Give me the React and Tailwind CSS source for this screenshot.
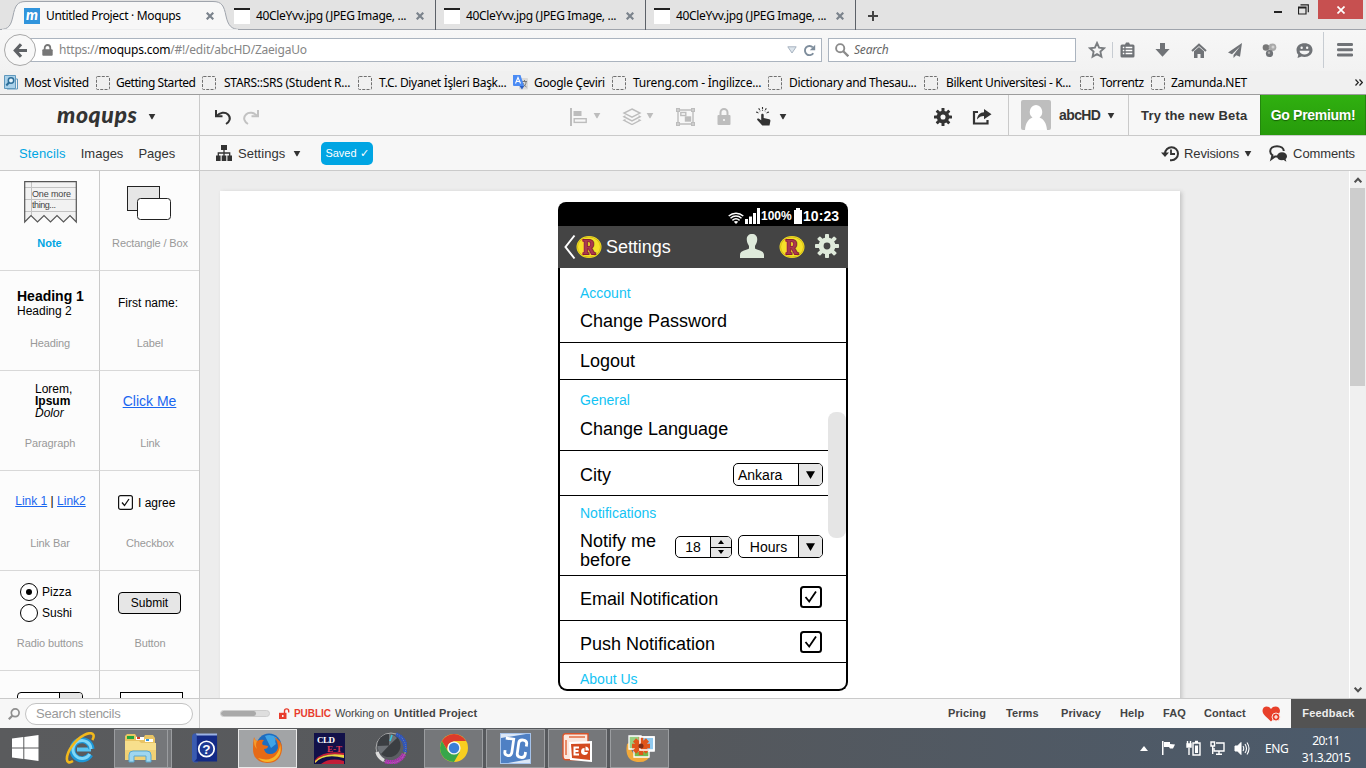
import React from "react";

const Caret = ({ className = "" }) => (
  <svg className={`shrink-0 ${className}`} width="8" height="7" viewBox="0 0 8 7" fill="currentColor"><path d="M.7 1h6.600L4.400 6.300h-.8z" /></svg>
);

const TabClose = ({ className = "" }) => (
  <svg className={`shrink-0 ${className}`} width="8" height="8" viewBox="0 0 8 8" stroke="#7b838c" strokeWidth="2.2"><path d="M.7.7l6.600 6.600M7.300.7L.7 7.300" /></svg>
);

const ImageTab = () => (
  <div className="mr-[8px] flex h-[30px] w-[202px] shrink-0 items-center border-r border-[#5c6168] pt-[2px]">
    <div className="h-4 w-4 shrink-0 border-t-2 border-[#222] bg-white" />
    <span className="ml-[6px] w-[160px] shrink-0 whitespace-nowrap tracking-[-0.33px]">40CleYvv.jpg (JPEG Image, ...</span>
    <TabClose />
  </div>
);

function TabStrip() {
  return (
    <div className="flex h-[30px] shrink-0 bg-[#e3e3e3] font-['Noto_Sans',sans-serif] text-[12px] text-black shadow-[inset_0_-1px_0_#9fa4ac]">
      <div className="relative flex h-[30px] w-[234px] shrink-0 items-center pt-[2px]">
        <svg className="absolute left-0 top-0" width="240" height="30" viewBox="0 0 240 30">
          <path d="M0 29.500C9 29.500 11 25 13 16C15 6 17 1.500 26 1.500H213C222 1.500 224 6 226 16C228 25 231 29.500 240 29.500" fill="#f7f7f7" stroke="#9fa4ac" />
          <path d="M2 30H238" stroke="#f7f7f7" strokeWidth="1.500" />
        </svg>
        <div className="relative ml-6 flex h-4 w-4 items-center justify-center bg-[#3094dc] font-['Lato',sans-serif] text-[15px] leading-none font-black text-white italic"><span className="-mt-[3px]">m</span></div>
        <span className="relative ml-[6px] w-[160px] whitespace-nowrap tracking-[-0.33px]">Untitled Project · Moqups</span>
        <TabClose className="relative" />
      </div>
      <ImageTab />
      <ImageTab />
      <ImageTab />
      <svg className="mt-[11px] ml-[4px]" width="10" height="10" viewBox="0 0 10 10" stroke="#444" strokeWidth="2"><path d="M5 0v10M0 5h10" /></svg>
      <div className="flex-1" />
      <svg className="mt-[10px]" width="10" height="4" viewBox="0 0 10 4"><path d="M1 2h8" stroke="#222" strokeWidth="2" /></svg>
      <svg className="mt-[4px] ml-[15px]" width="11" height="11" viewBox="0 0 11 11" fill="none" stroke="#222"><path d="M.5 3h7.500v7h-7.500zM.5 4h7.500M2.500.8h7.800v7.500" strokeWidth="1.200" /></svg>
      <div className="ml-[9px] flex h-[19px] w-[45px] items-center justify-center bg-[#c75050]">
        <svg width="8" height="8" viewBox="0 0 8 8" stroke="#fff" strokeWidth="1.700"><path d="M.5.5l7 7M7.500.5l-7 7" /></svg>
      </div>
      <div className="w-[3px]" />
    </div>
  );
}

function NavBar() {
  return (
    <div className="flex h-[41px] shrink-0 items-center bg-linear-to-b from-[#f7f7f7] to-[#f2f2f2] pb-[1px] font-['Noto_Sans',sans-serif] text-[12px]">
      <div className="relative z-10 ml-1 flex h-8 w-8 shrink-0 items-center justify-center rounded-full border border-[#a8a8a8] bg-[#f8f8f8]">
        <svg width="14" height="15" viewBox="0 0 14 15" fill="none" stroke="#5f6266" strokeWidth="3.200"><path d="M8 1.200L2.300 7.500L8 13.800M2.500 7.500H14" /></svg>
      </div>
      <div className="-ml-[6px] flex h-6 w-[792px] shrink-0 items-center border border-[#abb4bf] bg-white">
        <svg className="ml-[11px]" width="11" height="12" viewBox="0 0 11 12"><path d="M2.700 6V4a2.800 3 0 0 1 5.600 0v2" fill="none" stroke="#777" strokeWidth="1.800" /><rect x=".3" y="5.200" width="10.400" height="6.600" rx="1" fill="#777" /></svg>
        <span className="ml-[6px] flex-1 whitespace-nowrap tracking-[-0.22px] text-[#858585]">https://<span className="text-black">moqups.com</span>/#!/edit/abcHD/ZaeigaUo</span>
        <svg width="10" height="8" viewBox="0 0 10 8"><path d="M.8.8h8.400L5 7z" fill="#dde5ec" stroke="#a7b3c0" /></svg>
        <svg className="mr-[5px] ml-[6px]" width="13" height="13" viewBox="0 0 13 13"><path d="M10.300 9.200A4.600 4.600 0 1 1 9.800 3.300" fill="none" stroke="#7e8d9c" strokeWidth="1.900" /><path d="M12.200.8v5.400H6.800z" fill="#7e8d9c" /></svg>
      </div>
      <div className="ml-[6px] flex h-6 w-[248px] shrink-0 items-center border border-[#abb4bf] bg-white">
        <svg className="ml-[6px]" width="14" height="14" viewBox="0 0 14 14" fill="none" stroke="#8b8b8b"><circle cx="5.200" cy="5.200" r="4.100" strokeWidth="1.900" /><path d="M8.300 8.300l5 5" strokeWidth="2.300" /></svg>
        <span className="ml-[5px] tracking-[-0.2px] text-[#666] italic">Search</span>
      </div>
      <svg className="ml-[12px] shrink-0" width="18" height="18" viewBox="0 0 18 18"><path d="M9 2l2.100 4.600 5 .6-3.700 3.400 1 5L9 13.100l-4.400 2.500 1-5L1.900 7.200l5-.6z" fill="none" stroke="#7a7d80" strokeWidth="1.900" /></svg>
      <div className="ml-[6px] h-4 w-px bg-[#c7ccd2]" />
      <svg className="ml-[7px] shrink-0" width="15" height="16" viewBox="0 0 15 16"><path d="M.5 4a1.500 1.500 0 0 1 1.500-1.500h3L6 .6h3l1 1.900h3A1.500 1.500 0 0 1 14.500 4v10a1.500 1.500 0 0 1-1.500 1.500H2A1.500 1.500 0 0 1 .5 14z" fill="#707377" /><path d="M2.800 5.500h1.500M5.600 5.500h6.700M2.800 8.500h1.500M5.600 8.500h6.700M2.800 11.500h1.500M5.600 11.500h6.700" stroke="#fff" strokeWidth="1.700" /></svg>
      <svg className="ml-[20px] shrink-0" width="15" height="14" viewBox="0 0 15 14" fill="#707377"><path d="M5 0h5v6h4.600L7.500 13.800.4 6H5z" /></svg>
      <svg className="ml-[21px] shrink-0" width="16" height="15" viewBox="0 0 16 15"><path d="M1 8l7-6.300L15 8" fill="none" stroke="#707377" strokeWidth="2" /><path d="M3 8.300L8 4l5 4.300V15H9.500v-4h-3v4H3z" fill="#707377" /></svg>
      <svg className="ml-[21px] shrink-0" width="15" height="15" viewBox="0 0 15 15" fill="#707377"><path d="M14 0L0 9.500l4 1.700L12 3.500 5.500 12v3l2.700-2.700 3.800 1.500z" /></svg>
      <svg className="ml-[19px] shrink-0" width="16" height="15" viewBox="0 0 16 15"><circle cx="4" cy="4.500" r="3.300" fill="#777" /><circle cx="10.500" cy="4.300" r="3.800" fill="#a9a9a9" /><circle cx="7.500" cy="10.500" r="3.600" fill="#707377" /><circle cx="11" cy="4" r="1.500" fill="#d2d2d2" /><circle cx="7" cy="9.800" r="1.200" fill="#aaa" /></svg>
      <svg className="ml-[18px] shrink-0" width="17" height="15" viewBox="0 0 17 15"><path d="M8.500.3C13 .3 16.500 3 16.500 7s-3.500 6.900-8 6.900c-1.200 0-2-.1-3-.4L1.500 15l.8-3.300A6.500 6.500 0 0 1 .5 7C.5 3 4 .3 8.500.3z" fill="#707377" /><rect x="4.500" y="3.500" width="2.300" height="2.500" rx="1" fill="#f5f5f5" /><rect x="10" y="3.500" width="2.300" height="2.500" rx="1" fill="#f5f5f5" /><path d="M3.500 7.700h10c-.5 5-9.500 5-10 0z" fill="#f5f5f5" /></svg>
      <div className="ml-[10px] h-[36px] w-px bg-[#c7ccd2]" />
      <svg className="ml-[13px] shrink-0" width="16" height="14" viewBox="0 0 16 14" fill="#707377"><rect y="0" width="16" height="3" rx="1.200" /><rect y="5.200" width="16" height="3" rx="1.200" /><rect y="10.400" width="16" height="3" rx="1.200" /></svg>
    </div>
  );
}

const BlankIcon = () => (
  <svg className="shrink-0" width="14" height="14" viewBox="0 0 14 14"><rect x=".5" y=".5" width="13" height="13" rx="1" fill="none" stroke="#707070" strokeDasharray="3 1.300" /></svg>
);

const bookmarks = [
  { label: "Getting Started", box: "w-[106px] gap-[6px]", track: "tracking-[-0.45px]" },
  { label: "STARS::SRS (Student R...", box: "w-[156px] gap-[8px]", track: "tracking-[-0.26px]" },
  { label: "T.C. Diyanet İşleri Başk...", box: "w-[155px] gap-[7px]", track: "tracking-[-0.32px]" },
  { label: "Google Çeviri", box: "w-[99px] gap-[6px]", track: "tracking-[-0.32px]", translate: true },
  { label: "Tureng.com - İngilizce...", box: "w-[156px] gap-[7px]", track: "tracking-[-0.2px]" },
  { label: "Dictionary and Thesau...", box: "w-[156px] gap-[7px]", track: "tracking-[-0.35px]" },
  { label: "Bilkent Universitesi - K...", box: "w-[156px] gap-[8px]", track: "tracking-[-0.38px]" },
  { label: "Torrentz", box: "w-[71px] gap-[6px]", track: "tracking-[-0.4px]" },
  { label: "Zamunda.NET", box: "w-[100px] gap-[6px]", track: "tracking-[-0.33px]" },
];

function Bookmarks() {
  return (
    <div className="flex h-6 shrink-0 items-center border-b border-[#9c9c9c] bg-[#f0f0f0] font-['Noto_Sans',sans-serif] text-[12px] text-black">
      <svg className="ml-1 shrink-0" width="14" height="15" viewBox="0 0 14 15"><path d="M.5.5h11v13H.5z" fill="#a9d1ea" stroke="#5f98bd" /><path d="M12 4h1.500v10H3" fill="none" stroke="#5f98bd" /><circle cx="7" cy="5.500" r="2.700" fill="#e6f4fc" stroke="#2d6e99" strokeWidth="1.500" /><path d="M5 7.500L2.300 10.500" stroke="#2d6e99" strokeWidth="2" /></svg>
      <span className="ml-[6px] w-[72px] shrink-0 whitespace-nowrap tracking-[-0.35px]">Most Visited</span>
      {bookmarks.map((b) => (
        <div key={b.label} className={`flex shrink-0 items-center ${b.box}`}>
          {b.translate ? (
            <svg className="shrink-0" width="15" height="15" viewBox="0 0 15 15"><rect x="6" y="3" width="9" height="11.500" rx="1" fill="#dadada" /><path d="M9 6.500h5M11.500 5v1.500M10 12c2-1 3-3 3-5M10 8c.5 2 2 3 3.500 4" fill="none" stroke="#777" /><path d="M0 0h7.500L11 11H1a1 1 0 0 1-1-1z" fill="#4b8bf4" /><path d="M6.500 11H11l-2 3.500z" fill="#2c5fc4" /><path d="M2.500 8.500L5 2.500l2.500 6M3.500 6.500h3" fill="none" stroke="#fff" strokeWidth="1.100" /></svg>
          ) : <BlankIcon />}
          <span className={`whitespace-nowrap ${b.track}`}>{b.label}</span>
        </div>
      ))}
      <svg className="ml-auto mr-[3px] shrink-0" width="8" height="7" viewBox="0 0 8 7" fill="none" stroke="#222" strokeWidth="1.200"><path d="M.5.5l2.800 3-2.800 3M4.500.5l2.800 3-2.800 3" /></svg>
    </div>
  );
}

const Gear = ({ className, size }) => (
  <svg className={className} width={size} height={size} viewBox="0 0 24 24">
    <g fill="currentColor">
      {[0, 45, 90, 135, 180, 225, 270, 315].map((a) => <rect key={a} x="10" y="0" width="4" height="7" rx=".8" transform={`rotate(${a} 12 12)`} />)}
    </g>
    <circle cx="12" cy="12" r="5.900" fill="none" stroke="currentColor" strokeWidth="5" />
  </svg>
);

function AppHeader() {
  return (
    <div className="flex h-[41px] shrink-0 border-b border-[#cacaca] bg-[#f7f7f7] font-['Liberation_Sans',sans-serif] text-[#333]">
      <div className="flex w-[200px] shrink-0 items-center border-r border-[#cacaca]">
        <span className="-mt-[3px] ml-[57px] w-[91px] font-['Lato',sans-serif] text-[23px] leading-[26px] font-black tracking-[0.6px] italic">moqups</span>
        <Caret className="mt-[2px]" />
      </div>
      <svg className="mt-[14px] ml-[15px]" width="17" height="17" viewBox="0 0 17 17"><path d="M1.500 7C5 3.500 10 2.500 13 5.500C16.500 9 14.500 13 11 15" fill="none" stroke="#333" strokeWidth="2" /><path d="M1 1v6.200h6.500" fill="none" stroke="#333" strokeWidth="2" /></svg>
      <svg className="mt-[14px] ml-[10px]" width="17" height="17" viewBox="0 0 17 17"><path d="M15.500 7C12 3.500 7 2.500 4 5.500C.5 9 2.500 13 6 15" fill="none" stroke="#c2c2c2" strokeWidth="2" /><path d="M16 1v6.200H9.500" fill="none" stroke="#c2c2c2" strokeWidth="2" /></svg>
      <div className="ml-[311px] flex items-center text-[#bdbdbd]">
        <svg className="mt-[3px]" width="17" height="18" viewBox="0 0 17 18"><path d="M1 0v18" stroke="currentColor" strokeWidth="2" /><rect x="3.500" y="3" width="8" height="5" fill="currentColor" /><rect x="4.200" y="10.700" width="12" height="3.700" fill="none" stroke="currentColor" strokeWidth="1.400" /></svg>
        <Caret className="ml-[6px] mt-[1px]" />
        <svg className="ml-[21px] mt-[2px]" width="20" height="17" viewBox="0 0 20 17" fill="none" stroke="currentColor" strokeWidth="1.400"><path d="M10 1l8 4-8 4.200L2 5zM3.500 8L2 8.700l8 4.200 8-4.200-1.500-.7M3.500 11.700L2 12.400l8 4.100 8-4.100-1.500-.7" /></svg>
        <Caret className="ml-[4px] mt-[1px]" />
        <svg className="ml-[22px] mt-[3px]" width="19" height="18" viewBox="0 0 19 18" fill="none" stroke="currentColor" strokeWidth="1.400"><path d="M2 2h15v14H2z" /><rect x="4.800" y="4.500" width="5" height="3" /><rect x="9.500" y="9" width="5" height="4" fill="currentColor" /><path d="M.7.7h2.600v2.600H.7zM15.700.7h2.600v2.600h-2.600zM.7 14.700h2.600v2.600H.7zM15.700 14.700h2.600v2.600h-2.600z" fill="#f7f7f7" /></svg>
        <svg className="ml-[22px] mt-[2px]" width="14" height="17" viewBox="0 0 14 17"><path d="M3.500 8V4.500a3.500 3.500 0 0 1 7 0V8" fill="none" stroke="currentColor" strokeWidth="2" /><rect x=".5" y="7" width="13" height="10" rx="1" fill="currentColor" /><circle cx="7" cy="12" r="1.100" fill="#f7f7f7" /></svg>
      </div>
      <svg className="ml-[25px] mt-[12px]" width="15" height="19" viewBox="0 0 15 19"><path d="M5.200 8c0-1.700 2.500-1.700 2.500 0v3l5.500 1.200c1 .3 1.300.9 1.200 1.800L13.500 18.500H6.300L1.300 13c-.7-1.200.7-2 1.700-1.200l2.200 1.500z" fill="#333" /><path d="M6.500 0v3.800M2.700 1.300l1.500 2.900M10.300 1.300L8.800 4.200M0 5l3 1M13 5l-3 1" stroke="#333" strokeWidth="1.100" strokeDasharray="2 .7" /></svg>
      <Caret className="ml-[8px] mt-[18px]" />
      <Gear className="ml-[147px] mt-[13px]" size={18} />
      <svg className="ml-[20px] mt-[14px]" width="20" height="16" viewBox="0 0 20 16"><path d="M6 3H2v11.500h13.500V11" fill="none" stroke="#333" strokeWidth="2.200" /><path d="M5 10.500C5.500 6 8 3.500 12 3.300V0l7.500 5.300-7.500 5V7C9 7 7 8 5 10.500z" fill="#333" /></svg>
      <div className="ml-[16px] flex w-[121px] items-center border-x border-[#cacaca] text-[14px] font-bold">
        <svg className="ml-[12px]" width="30" height="30" viewBox="0 0 30 30"><rect width="30" height="30" rx="2" fill="#bebebe" /><path d="M4 30c.5-7 3.500-11 7.500-12.500A7 7 0 0 1 15 5a7 7 0 0 1 3.500 12.500C22.500 19 25.500 23 26 30z" fill="#fff" /></svg>
        <span className="ml-[8px] w-[48px] pt-[1px] tracking-[-0.6px]">abcHD</span>
        <Caret />
      </div>
      <div className="flex w-[131px] items-center pt-[2px] pl-[12px] text-[13px] font-bold tracking-[0.19px] whitespace-nowrap">Try the new Beta</div>
      <div className="flex flex-1 items-center justify-center border-x border-[#23870d] bg-linear-to-b from-[#30b010] to-[#279b0b] text-[14px] font-bold tracking-[-0.3px] whitespace-nowrap text-white [text-shadow:0_1px_1px_#176006]">Go Premium!</div>
    </div>
  );
}

function SubHeader() {
  return (
    <div className="flex h-[35px] shrink-0 items-center border-b border-[#cacaca] bg-[#f7f7f7] font-['Liberation_Sans',sans-serif] text-[13px] whitespace-nowrap text-[#333]">
      <div className="flex h-full w-[200px] items-center gap-[15px] border-r border-[#cacaca] pt-[1px] pl-[19px]">
        <span className="tracking-[0.15px] text-[#00a5e3]">Stencils</span>
        <span>Images</span>
        <span>Pages</span>
      </div>
      <svg className="ml-[16px]" width="16" height="16" viewBox="0 0 16 16" fill="#333"><path d="M5 0h6v5H5zM0 10.500h4.600V16H0zM5.700 10.500h4.600V16H5.700zM11.400 10.500H16V16h-4.600z" /><path d="M8 4v7M2.300 11V8h11.400v3" fill="none" stroke="#333" strokeWidth="1.300" /></svg>
      <span className="ml-[6px] w-[55px] pt-[1px] tracking-[0.03px]">Settings</span>
      <Caret />
      <div className="ml-[20px] flex h-[23px] w-[52px] items-center justify-center rounded-[5px] bg-[#00a5e3] pt-[1px] text-[11px] text-white">Saved ✓</div>
      <div className="flex-1" />
      <svg width="18" height="17" viewBox="0 0 18 17"><path d="M4 8.500a6.500 6.500 0 1 1 6.500 6.700h-1.500" fill="none" stroke="#333" strokeWidth="2" /><path d="M0 7.500h8L4 12z" fill="#333" /><path d="M10 4.500v4.500h4" fill="none" stroke="#333" strokeWidth="1.800" /></svg>
      <span className="ml-[5px] w-[60px] pt-[1px] tracking-[-0.15px]">Revisions</span>
      <Caret />
      <svg className="ml-[17px]" width="19" height="17" viewBox="0 0 19 17"><path d="M8 1.200C12 1.200 14.800 3.200 14.800 6M8 1.200C4 1.200 1.200 3.400 1.200 6.300c0 1.800 1 3.200 2.300 4L2.500 14l3.500-2.500h3" fill="none" stroke="#333" strokeWidth="2" /><path d="M13 7.200c3 0 5 1.700 5 4 0 1.200-.5 2.100-1.400 2.800l.8 2.700-2.700-1.600c-4 .7-6.700-1.200-6.700-3.900 0-2.300 2-4 5-4z" fill="#333" /></svg>
      <span className="mr-[11px] ml-[5px] pt-[1px] tracking-[-0.12px]">Comments</span>
    </div>
  );
}

const Cell = ({ label, active, className = "", right, children }) => (
  <div className={`flex h-[100px] flex-col overflow-hidden border-b border-[#d8d8d8] ${right ? "" : "border-r border-r-[#cacaca]"}`}>
    <div className={`h-[65px] shrink-0 ${className}`}>{children}</div>
    <div className={`text-center text-[11px] leading-[14px] whitespace-nowrap ${active ? "font-bold text-[#00a5e3]" : "pl-[1px] tracking-[-0.12px] text-[#999]"}`}>{label}</div>
  </div>
);

function Stencils() {
  return (
    <div className="grid w-[200px] shrink-0 auto-rows-[100px] grid-cols-[100px_99px] overflow-hidden border-r border-[#cacaca] bg-[#fcfcfc] font-['Liberation_Sans',sans-serif] text-black">
      <Cell label="Note" active className="pt-[10px] pl-[24px]">
        <svg width="54" height="43" viewBox="0 0 54 43">
          <path d="M.7.700H52.300V41L46 34.500L39.500 41L33 34.500L26.500 41L20 34.500L13.500 41L7 34.500L.7 41z" fill="#f2f2f2" />
          <path d="M.5 6.500H52M.5 18.500H52M.5 30.500H52M7.500.5V35" stroke="#c2c2c2" fill="none" />
          <path d="M.7.700H52.300V41L46 34.500L39.500 41L33 34.500L26.500 41L20 34.500L13.500 41L7 34.500L.7 41z" fill="none" stroke="#555" strokeWidth="1.200" />
          <text x="8" y="16" fontSize="9" fill="#444" textLength="39">One more</text>
          <text x="8" y="27" fontSize="9" fill="#444" textLength="24">thing...</text>
        </svg>
      </Cell>
      <Cell right label="Rectangle / Box" className="pt-[15px] pl-[27px]">
        <svg width="44" height="35" viewBox="0 0 44 35" stroke="#222"><rect x=".5" y=".5" width="32" height="24" fill="#e6e6e6" /><rect x="10.500" y="12.500" width="33" height="21" rx="3" fill="#fff" /></svg>
      </Cell>
      <Cell label="Heading" className="pt-[17px] pl-[17px]">
        <div className="text-[14px] leading-[17px] font-bold whitespace-nowrap">Heading 1</div>
        <div className="text-[12px] leading-[13px]">Heading 2</div>
      </Cell>
      <Cell right label="Label" className="pt-[24px] pl-[18px] text-[12px] leading-[16px]">First name:</Cell>
      <Cell label="Paragraph" className="pt-[12px] pl-[35px] text-[12px] leading-[12px]">
        <div>Lorem,</div><div className="font-bold">Ipsum</div><div className="italic">Dolor</div>
      </Cell>
      <Cell right label="Link" className="pt-[22px] text-center text-[14px] leading-[17px]"><span className="text-[#1a66f0] underline">Click Me</span></Cell>
      <Cell label="Link Bar" className="pt-[22px] pl-[2px] text-center text-[12px] leading-[16px] whitespace-nowrap"><span className="text-[#1a66f0] underline">Link 1</span> | <span className="text-[#1a66f0] underline">Link2</span></Cell>
      <Cell right label="Checkbox" className="flex items-start pt-[24px] pl-[18px] text-[12px] leading-[15px]">
        <svg width="15" height="15" viewBox="0 0 15 15" fill="none"><rect x=".6" y=".6" width="13.800" height="13.800" rx="2" stroke="#111" strokeWidth="1.200" fill="#fff" /><path d="M4 7.500l2.500 3L11 4" stroke="#111" strokeWidth="1.300" /></svg>
        <span className="mt-[1px] ml-[5px]">I agree</span>
      </Cell>
      <Cell label="Radio buttons" className="flex flex-col gap-[3px] pt-[12px] pl-[20px] text-[12px] leading-[18px]">
        <div className="flex items-center gap-[4px]"><span className="flex h-[18px] w-[18px] items-center justify-center rounded-full border border-black bg-white"><span className="h-[6px] w-[6px] rounded-full bg-black" /></span>Pizza</div>
        <div className="flex items-center gap-[4px]"><span className="h-[18px] w-[18px] rounded-full border border-black bg-white" />Sushi</div>
      </Cell>
      <Cell right label="Button" className="pt-[21px] pl-[18px]">
        <div className="flex h-[22px] w-[63px] items-center justify-center rounded-[4px] border border-black bg-[#e6e6e6] text-[12px]">Submit</div>
      </Cell>
      <Cell className="pt-[21px] pl-[17px]">
        <div className="flex h-[22px] w-[66px] overflow-hidden rounded-[4px] border border-black bg-white"><div className="flex-1" /><div className="w-[23px] border-l border-black bg-[#e6e6e6]" /></div>
      </Cell>
      <Cell right className="pt-[21px] pl-[20px]"><div className="h-[22px] w-[63px] border border-black bg-white" /></Cell>
    </div>
  );
}

const RBadge = ({ className }) => (
  <svg className={`shrink-0 ${className}`} width="26" height="24" viewBox="0 0 26 24">
    <ellipse cx="13" cy="12" rx="12.500" ry="11" fill="#f5e02a" />
    <ellipse cx="13" cy="12" rx="11.500" ry="10" fill="none" stroke="#d6bf10" />
    <g transform="translate(13 0) scale(.86 1)">
      <text x="0" y="19" textAnchor="middle" fontFamily="Liberation Serif, serif" fontWeight="bold" fontSize="20" fill="#8f2238" stroke="#8a1d34" strokeWidth="1.800">R</text>
      <text x="0" y="19" textAnchor="middle" fontFamily="Liberation Serif, serif" fontWeight="bold" fontSize="20" fill="#a83a50">R</text>
    </g>
  </svg>
);

const CheckSquare = () => (
  <svg className="mr-[24px] ml-auto shrink-0" width="22" height="22" viewBox="0 0 22 22" fill="none"><rect x="1" y="1" width="20" height="20" rx="2.500" stroke="#000" strokeWidth="2" /><path d="M5.500 11l3.700 4.500L16 5.500" stroke="#000" strokeWidth="1.800" /></svg>
);

const Select = ({ value, box, inner }) => (
  <div className={`flex shrink-0 overflow-hidden rounded-[5px] border border-black bg-white text-[14px] ${box}`}>
    <div className={`flex flex-1 items-center ${inner}`}>{value}</div>
    <div className="flex w-[24px] items-center justify-center border-l border-black bg-[#e6e6e6]">
      <svg width="9" height="8" viewBox="0 0 9 8"><path d="M0 .3h9L4.500 8z" /></svg>
    </div>
  </div>
);

const Caption = ({ children, className }) => <div className={`text-[14px] leading-[16px] text-[#12c3f4] ${className}`}>{children}</div>;

function Phone() {
  return (
    <div className="relative mt-[11px] ml-[338px] flex h-[489px] w-[290px] flex-col font-['Liberation_Sans',sans-serif] text-black">
      <div className="flex h-[24px] shrink-0 items-center rounded-t-[8px] bg-black pt-[4px] text-white">
        <svg className="ml-[170px] mt-[3px]" width="16" height="12" viewBox="0 0 16 12" fill="none" stroke="#fff" strokeWidth="1.500"><path d="M.7 4C5 .2 11 .2 15.300 4M2.500 6.200c3.200-2.800 7.800-2.800 11 0M4.400 8.400c2.200-1.900 5-1.900 7.200 0" /><path d="M5.800 9.700q2.200-1.500 4.400 0L8 12z" fill="#fff" stroke="none" /></svg>
        <svg className="ml-[1px]" width="16" height="16" viewBox="0 0 16 16" fill="#fff"><path d="M0 11h3v5H0zM4 8.500h3V16H4zM8 5h3v11H8zM12 0h3v16h-3z" /></svg>
        <span className="w-[33px] text-[12px] font-bold tracking-[0px]">100%</span>
        <svg width="8" height="16" viewBox="0 0 8 16" fill="#fff"><path d="M2 0h4v2h2v14H0V2h2z" /></svg>
        <span className="ml-[1px] text-[14px] font-bold tracking-[0.05px]">10:23</span>
      </div>
      <div className="flex h-[42px] shrink-0 items-center bg-[#444] text-white">
        <svg className="ml-[6px] shrink-0" width="12" height="26" viewBox="0 0 12 26" fill="none" stroke="#fff" strokeWidth="2"><path d="M10.500 1.500L1.500 13l9 11.500" /></svg>
        <RBadge className="ml-0" />
        <span className="ml-[4px] w-[132px] pt-[1px] text-[18px] tracking-[-0.05px]">Settings</span>
        <svg className="-mt-[2px] ml-[2px] shrink-0" width="24" height="24" viewBox="0 0 24 24" fill="#dfeadb"><path d="M12 0c3.500 0 5.500 2.300 5.200 6-.2 2.800-1.400 4.500-2.200 6v2.500c1.500 1.700 9 1.500 9 6.500v3H0v-3c0-5 7.500-4.800 9-6.500V12c-.8-1.500-2-3.200-2.200-6C6.500 2.300 8.500 0 12 0z" /></svg>
        <RBadge className="ml-[15px]" />
        <Gear className="-mt-[2px] ml-[10px] shrink-0 text-[#dfeadb]" size={24} />
      </div>
      <div className="flex flex-1 flex-col overflow-hidden rounded-b-[9px] border-x-2 border-b-2 border-black bg-white text-[18px] leading-[20px]">
        <div className="h-[75px] shrink-0 border-b border-black pt-[17px] pl-[20px]">
          <Caption>Account</Caption>
          <div className="mt-[10px]">Change Password</div>
        </div>
        <div className="h-[37px] shrink-0 border-b border-black pt-[8px] pl-[20px]">Logout</div>
        <div className="h-[71px] shrink-0 border-b border-black pt-[12px] pl-[20px]">
          <Caption>General</Caption>
          <div className="mt-[11px]">Change Language</div>
        </div>
        <div className="flex h-[45px] shrink-0 items-start border-b border-black pl-[20px]">
          <span className="mt-[14px] w-[153px]">City</span>
          <Select value="Ankara" box="mt-[12px] h-[23px] w-[90px]" inner="pt-[1px] pl-[4px]" />
        </div>
        <div className="h-[80px] shrink-0 border-b border-black pt-[9px] pl-[20px]">
          <Caption>Notifications</Caption>
          <div className="flex">
            <div className="mt-[11px] w-[95px] leading-[19px]">Notify me before</div>
            <div className="mt-[15px] flex h-[22px] w-[57px] overflow-hidden rounded-[5px] border border-black text-[14px]">
              <div className="flex flex-1 items-center justify-center">18</div>
              <div className="flex w-[21px] flex-col border-l border-black bg-[#e6e6e6]">
                <div className="flex flex-1 items-center justify-center border-b border-black"><svg width="6" height="4" viewBox="0 0 6 4"><path d="M0 4h6L3 0z" /></svg></div>
                <div className="flex flex-1 items-center justify-center"><svg width="6" height="4" viewBox="0 0 6 4"><path d="M0 0h6L3 4z" /></svg></div>
              </div>
            </div>
            <Select value="Hours" box="mt-[14px] ml-[6px] h-[23px] w-[85px]" inner="justify-center" />
          </div>
        </div>
        <div className="flex h-[45px] shrink-0 items-start border-b border-black pl-[20px]"><span className="mt-[13px] tracking-[-0.05px]">Email Notification</span><div className="mt-[10px] ml-auto flex"><CheckSquare /></div></div>
        <div className="flex h-[42px] shrink-0 items-start border-b border-black pl-[20px]"><span className="mt-[13px]">Push Notification</span><div className="mt-[10px] ml-auto flex"><CheckSquare /></div></div>
        <Caption className="pt-[8px] pl-[20px]">About Us</Caption>
      </div>
      <div className="absolute top-[210px] left-[270px] h-[126px] w-[18px] rounded-[8px] bg-[#e5e5e5]" />
    </div>
  );
}

const ScrollArrow = ({ down }) => (
  <svg width="8" height="6" viewBox="0 0 8 6" fill="none" stroke="#505050" strokeWidth="2"><path d={down ? "M.7.7L4 4.200L7.300.7" : "M.7 5.300L4 1.800L7.300 5.300"} /></svg>
);

function Workspace() {
  return (
    <div className="flex flex-1 overflow-hidden bg-[#ededed]">
      <div className="flex-1 overflow-hidden pt-[20px] pl-[20px]">
        <div className="flex h-[560px] w-[960px] bg-white shadow-[2px_1px_4px_#c4c4c4]"><Phone /></div>
      </div>
      <div className="flex w-[17px] flex-col border-l border-white bg-[#f0f0f0]">
        <div className="flex h-[17px] items-center justify-center">
          <ScrollArrow />
        </div>
        <div className="h-[198px] w-[15px] bg-[#cdcdcd]" />
        <div className="flex-1" />
        <div className="flex h-[17px] items-center justify-center"><ScrollArrow down /></div>
      </div>
    </div>
  );
}

function StatusBar() {
  return (
    <div className="flex h-[30px] shrink-0 items-center border-t border-[#cacaca] bg-[#f7f7f7] font-['Liberation_Sans',sans-serif] text-[11px] whitespace-nowrap text-[#444]">
      <div className="flex h-full w-[200px] shrink-0 items-center border-r border-[#cacaca]">
        <svg className="ml-[8px]" width="12" height="12" viewBox="0 0 12 12" fill="none" stroke="#8f8f8f"><circle cx="7.200" cy="4.800" r="3.900" strokeWidth="1.700" /><path d="M4.500 7.500L.8 11.200" strokeWidth="2.200" /></svg>
        <div className="ml-[5px] flex h-[22px] w-[168px] items-center rounded-full border border-[#c3c3c3] bg-white pl-[10px] text-[13px] tracking-[-0.25px] text-[#999]">Search stencils</div>
      </div>
      <div className="ml-[20px] h-[7px] w-[50px] overflow-hidden rounded-full border border-[#cdcdcd] bg-[#dedede]"><div className="h-full w-[35px] rounded-full bg-[#a9a9a9]" /></div>
      <svg className="ml-[9px]" width="11" height="11" viewBox="0 0 11 11"><path d="M5.500 5V3a2.100 2.100 0 0 1 4.200 0v1.500" fill="none" stroke="#e83c2c" strokeWidth="1.400" /><path d="M0 4.800h7.500V11H0z" fill="#e83c2c" /><path d="M3 7h1.500v2H3z" fill="#f7f7f7" /></svg>
      <span className="ml-[4px] w-[41px] text-[10px] font-bold tracking-[-0.05px] text-[#e83c2c]">PUBLIC</span>
      <span className="w-[59px] tracking-[-0.15px]">Working on</span>
      <span className="font-bold tracking-[0.12px]">Untitled Project</span>
      <div className="ml-auto flex h-full items-center text-[11px] font-bold tracking-[0.1px]">
        <span className="w-[58px]">Pricing</span>
        <span className="w-[55px]">Terms</span>
        <span className="w-[59px]">Privacy</span>
        <span className="w-[43px]">Help</span>
        <span className="w-[41px]">FAQ</span>
        <span className="w-[58px]">Contact</span>
        <svg width="19" height="16" viewBox="0 0 19 16"><path d="M9 15.500C5 11.500.5 8.500.5 4.800.5 0 6.500-1 9 3c2.500-4 9-3 9 1.800 0 3.700-5 6.700-9 10.700z" fill="#e8402a" /><circle cx="14" cy="11" r="4" fill="#e8402a" stroke="#fbe3df" /><path d="M14 9v4M12 11h4" stroke="#fff" strokeWidth="1.200" /></svg>
        <div className="ml-[10px] flex h-full w-[75px] items-center justify-center bg-[#535353] tracking-[0.2px] text-[#eee]">Feedback</div>
      </div>
    </div>
  );
}

const TaskButton = ({ className = "w-[59px] justify-center", active, children }) => (
  <div className={`flex h-[39px] shrink-0 items-center border ${active ? "border-[#eaeaea] bg-[#a2a4a6]" : "border-[#9b9da0] bg-[#75777a]"} ${className}`}>{children}</div>
);

function Taskbar() {
  return (
    <div className="flex h-10 shrink-0 items-center bg-linear-to-r from-[#5a5b5d] via-[#55585c] to-[#4b5a6b] font-['Noto_Sans',sans-serif] text-white">
      <svg className="ml-[12px] shrink-0" width="27" height="26" viewBox="0 0 27 26" fill="#fff"><path d="M0 3.500L11.300 2v10.500H0zM12.300 1.900L26.500 0v12.500H12.300zM0 13.500h11.300V24L0 22.500zM12.300 13.500h14.200V26l-14.200-1.900z" /></svg>
      <svg className="ml-[26px] shrink-0" width="32" height="32" viewBox="0 0 32 32">
        <path d="M26 17.500H12" stroke="#59c5f2" strokeWidth="4" />
        <path d="M25.300 22.500A9.500 9.500 0 1 1 26.500 17" fill="none" stroke="#1c97d8" strokeWidth="6" />
        <path d="M24.800 22A9 9 0 1 1 26 17" fill="none" stroke="#7fd7f8" strokeWidth="3" />
        <path d="M8 29C0 34 0 24 7 14C14 4 26-2 28.500 3C29 5 28 7 27.300 8" fill="none" stroke="#f2b81c" strokeWidth="2.600" />
      </svg>
      <TaskButton className="ml-[17px] w-[54px] justify-start pl-[9px]">
        <svg width="34" height="30" viewBox="0 0 34 30"><path d="M1 3l2-2h8l2 3h7l1-2h8l2 3v22H1z" fill="#e8c464" /><path d="M3 3h7v3H3z" fill="#23a53b" /><path d="M12 4h8v3h-8z" fill="#fff" /><path d="M13 4h3v2h-3z" fill="#d93f27" /><path d="M21 6h8v3h-8z" fill="#fff" /><path d="M22 6h3v2h-3z" fill="#3598db" /><path d="M1 8h14l2 2h15v17H1z" fill="#f7df8c" /><path d="M1 17h31v10H1z" fill="#f0d074" /><path d="M5 29v-7q0-4 4-4h14q4 0 4 4v7h-5v-6H10v6z" fill="#9fd6ef" stroke="#5ba8cf" /></svg>
      </TaskButton>
      <div className="h-[39px] w-[4px] shrink-0 border-y border-r border-[#9b9da0] bg-[#75777a]" />
      <svg className="ml-[20px] shrink-0" width="27" height="32" viewBox="0 0 28 32"><path d="M2 1h4v30H2q-2-1-2-3V4q0-2 2-3z" fill="#3a5bb0" /><path d="M5 2h21v28H2q2-1 3-3z" fill="#132a86" /><path d="M4 1h22v2H5z" fill="#9bb2e4" /><circle cx="15" cy="17" r="8" fill="#1e3a94" stroke="#fff" strokeWidth="1.800" /><text x="15" y="22" textAnchor="middle" fontFamily="Liberation Sans" fontSize="14" fontWeight="bold" fill="#fff">?</text></svg>
      <TaskButton active className="ml-[19px] w-[59px] justify-center">
        <svg width="31" height="31" viewBox="0 0 31 31"><circle cx="17" cy="13" r="12.500" fill="#1e6dc0" /><path d="M13 3q6-3 12 2-3 2-1 6l-5 4z" fill="#3fa4e6" /><path d="M2 4q1 3 3 4 4-2 7-1-3 3-1 5l5 1q0 3-4 3 1 5 6 5 6 0 8-6 0-7-4-11 9 4 8 13-2 13-15 13Q1 29 1 16 1 9 2 4z" fill="#e66a16" /><path d="M28 11q3 12-7 17-9 3-15-3 12 4 18-3 4-5 4-11z" fill="#f7b52b" /><path d="M2 5q1 3 3 3-2 4 0 8-4-3-3-11z" fill="#f59b2c" /></svg>
      </TaskButton>
      <svg className="ml-[17px] shrink-0" width="31" height="31" viewBox="0 0 31 31"><rect width="31" height="31" fill="#121149" /><text x="3" y="10" fontFamily="Liberation Serif" fontSize="9" fontWeight="bold" fill="#fff" textLength="18">CLD</text><text x="13" y="19" fontFamily="Liberation Serif" fontSize="9" fontWeight="bold" fill="#e33750" textLength="15">E-T</text><path d="M1 30Q9 18 30 23V20Q9 17 1 27z" fill="#c21d38" /><path d="M1 30Q10 20 30 25V22Q10 19 1 28z" fill="#ead942" /><path d="M7 31Q16 24 30 28V31z" fill="#c21d38" /></svg>
      <svg className="ml-[30px] shrink-0" width="32" height="32" viewBox="0 0 32 32"><circle cx="16" cy="16" r="15" fill="#5b5e63" stroke="#aaa" /><path d="M21 2.500A14.300 14.300 0 0 1 30 20" fill="none" stroke="#2b55c6" strokeWidth="4.500" strokeDasharray="1.600 .4" /><path d="M29 22A14.300 14.300 0 0 1 10 29" fill="none" stroke="#b433b7" strokeWidth="4.500" strokeDasharray="1.600 .4" /><path d="M9 28.500A14 14 0 0 1 2 20" fill="none" stroke="#ddd" strokeWidth="3.500" /><circle cx="14" cy="13.500" r="11.500" fill="#3b3e42" /><path d="M14 2a11.500 11.500 0 0 1 8 4l-8 7.500zM6 22a11.500 11.500 0 0 1-3.500-8L14 13.500z" fill="#6d7176" /><path d="M17 3l-2 6" stroke="#33c8e0" strokeWidth="1.500" /></svg>
      <TaskButton className="ml-[17px] w-[59px] justify-center">
        <svg width="30" height="30" viewBox="0 0 30 30"><circle cx="15" cy="15" r="14" fill="#f8ce20" /><path d="M2.900 8A14 14 0 0 1 27.100 8H15l-6 3.500-1 5z" fill="#dc3b2c" /><path d="M2.900 8A14 14 0 0 0 15 29l6-10.500-6 3-6-3z" fill="#38a64a" /><circle cx="15" cy="15" r="6.600" fill="#f5f5f5" /><circle cx="15" cy="15" r="5.200" fill="#3b7fd6" /></svg>
      </TaskButton>
      <TaskButton className="ml-[3px] w-[59px] justify-center">
        <svg width="31" height="31" viewBox="0 0 31 31"><rect x=".5" y=".5" width="30" height="30" fill="#4f80c4" stroke="#a6c3ea" /><path d="M1 1h25L1 5zM30 2v25zM30 30H8l22-4z" fill="#dbe7f7" /><g transform="rotate(8 15 15)" fill="none" stroke="#fff" strokeWidth="2.800"><path d="M4.500 6.500h8v13q0 4-3.500 4-3.500 0-3.500-3v-2M26 12V9.500q0-3.500-3.800-3.500-4.200 0-4.200 3.500V20q0 3.500 4 3.500 4 0 4-3.500v-2.500" /></g></svg>
      </TaskButton>
      <TaskButton className="ml-[3px] w-[59px] justify-center">
        <svg width="31" height="30" viewBox="0 0 31 30"><path d="M3 .7h23v26H4.500Q1 27 1 23V3q0-2 2-2.300z" fill="#fbe7dd" stroke="#d8542b" strokeWidth="1.400" /><path d="M7 4h16M4 7v15" stroke="#e98a67" strokeWidth="2" /><path d="M7 9l23-1v21L8 27z" fill="#fff" /><path d="M9 11l19-.5V27L10 25z" fill="#d34a1f" /><path d="M17 14.500h-4.500v7H17M12.500 18h4" stroke="#fff" strokeWidth="2" fill="none" /><path d="M22.500 15a3.500 3.500 0 1 0 3.500 4h-3.500z" fill="#fff" /><path d="M23.500 13.500a4 4 0 0 1 3.500 4h-3.500z" fill="#fff" /></svg>
      </TaskButton>
      <TaskButton className="ml-[3px] w-[59px] justify-center">
        <svg width="32" height="30" viewBox="0 0 32 30"><path d="M3 11Q0 27 13 29Q24 30 26 22Q14 27 9 20Q6 16 7 9z" fill="#f2a93a" /><path d="M5 3h12v13H5z" fill="#98cf82" stroke="#fff" strokeWidth="1.300" /><path d="M10 18h15v6H10z" fill="#74b94c" stroke="#fff" strokeWidth="1.300" /><path d="M16 4h14v14H16z" fill="#8fc9ef" stroke="#fff" strokeWidth="1.500" /><g stroke="#e0551a" strokeWidth="4.500"><path d="M17 4v18M8 13h18M10.500 7l13 12M23.500 7L10.500 19" /></g><path d="M16 4h14v13H16z" fill="none" stroke="#fff" strokeWidth="1.500" /><circle cx="17" cy="13" r="2.500" fill="#812e17" /></svg>
      </TaskButton>
      <div className="flex-1" />
      <svg width="8" height="5" viewBox="0 0 8 5"><path d="M0 5h8L4 0z" fill="#fff" /></svg>
      <svg className="ml-[13px]" width="16" height="16" viewBox="0 0 16 16" fill="#fff"><path d="M1 1h1.500v14H1z" /><path d="M3 2h6v2l5 .5-2 4H9l-1-1.500H3z" /></svg>
      <svg className="ml-[9px]" width="15" height="16" viewBox="0 0 15 16" fill="none" stroke="#fff" strokeWidth="1.400"><path d="M7 3h7v12H7zM9 1.500h3M1.500 1v3M4.500 1v3M3 8v7" /><path d="M1 4h4v3H1z" fill="#fff" /><path d="M9 5.500h3v7.500H9z" fill="#fff" stroke="none" /></svg>
      <svg className="ml-[9px]" width="16" height="16" viewBox="0 0 16 16" fill="none" stroke="#fff" strokeWidth="1.400"><path d="M6 3h8v8H4V8M9 11v3M6 14.300h6" /><path d="M1 2h3.500v4H1zM2.700 6v8" /></svg>
      <svg className="ml-[8px]" width="16" height="15" viewBox="0 0 16 15" fill="none" stroke="#fff"><path d="M1 5h2.500L7 1.500v12L3.500 10H1z" fill="#fff" /><path d="M9 5q1.500 2.500 0 5M11 3q3 4.500 0 9M13 1.500q4 6 0 12" strokeWidth="1.100" /></svg>
      <span className="ml-[15px] w-[36px] pt-[1px] text-[12px] tracking-[-0.4px]">ENG</span>
      <div className="mr-[15px] flex w-[50px] flex-col items-center pt-[1px] text-[12px] leading-[17px] tracking-[-0.65px] whitespace-nowrap"><span>20:11</span><span>31.3.2015</span></div>
    </div>
  );
}

export default function App() {
  return (
    <div className="flex h-[768px] w-[1366px] flex-col overflow-hidden bg-white">
      <TabStrip />
      <NavBar />
      <Bookmarks />
      <AppHeader />
      <SubHeader />
      <div className="flex h-[527px] shrink-0 overflow-hidden">
        <Stencils />
        <Workspace />
      </div>
      <StatusBar />
      <Taskbar />
    </div>
  );
}
